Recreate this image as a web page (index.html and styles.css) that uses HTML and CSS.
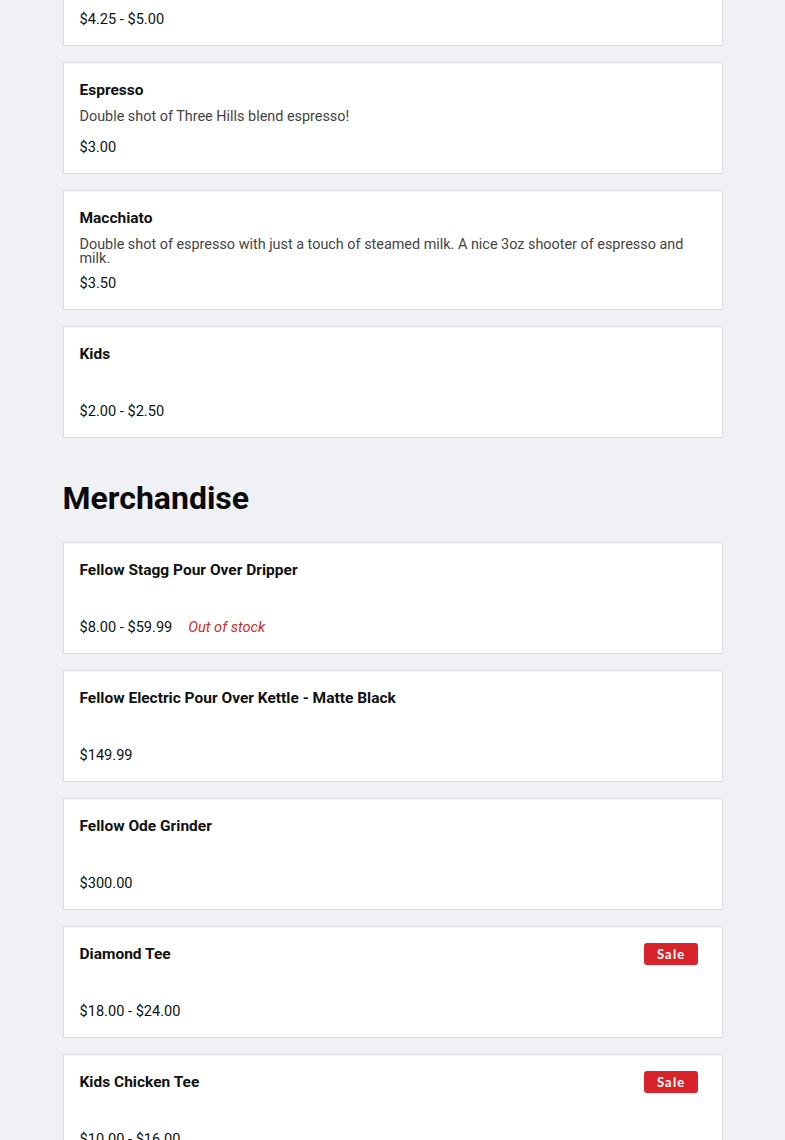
FILE: index.html
```html
<!DOCTYPE html>
<html lang="en">
<head>
<meta charset="utf-8">
<title>Menu</title>
<link rel="stylesheet" href="styles.css">
</head>
<body>
<main class="menu">
  <section class="category category-first">
    <ul class="items">
      <li class="item">
        <div class="item-name">Latte</div>
        <p class="item-desc"></p>
        <div class="item-meta"><span class="price">$4.25 - $5.00</span></div>
      </li>
      <li class="item">
        <div class="item-name">Espresso</div>
        <p class="item-desc">Double shot of Three Hills blend espresso!</p>
        <div class="item-meta"><span class="price">$3.00</span></div>
      </li>
      <li class="item">
        <div class="item-name">Macchiato</div>
        <p class="item-desc">Double shot of espresso with just a touch of steamed milk. A nice 3oz shooter of espresso and milk.</p>
        <div class="item-meta"><span class="price">$3.50</span></div>
      </li>
      <li class="item">
        <div class="item-name">Kids</div>
        <p class="item-desc"></p>
        <div class="item-meta"><span class="price">$2.00 - $2.50</span></div>
      </li>
    </ul>
  </section>
  <section class="category">
    <h2 class="category-title">Merchandise</h2>
    <ul class="items">
      <li class="item">
        <div class="item-name">Fellow Stagg Pour Over Dripper</div>
        <p class="item-desc"></p>
        <div class="item-meta"><span class="price">$8.00 - $59.99</span><span class="stock">Out of stock</span></div>
      </li>
      <li class="item">
        <div class="item-name">Fellow Electric Pour Over Kettle - Matte Black</div>
        <p class="item-desc"></p>
        <div class="item-meta"><span class="price">$149.99</span></div>
      </li>
      <li class="item">
        <div class="item-name">Fellow Ode Grinder</div>
        <p class="item-desc"></p>
        <div class="item-meta"><span class="price">$300.00</span></div>
      </li>
      <li class="item">
        <div class="item-name">Diamond Tee</div>
        <p class="item-desc"></p>
        <div class="item-meta"><span class="price">$18.00 - $24.00</span></div>
        <span class="badge">Sale</span>
      </li>
      <li class="item">
        <div class="item-name">Kids Chicken Tee</div>
        <p class="item-desc"></p>
        <div class="item-meta"><span class="price">$10.00 - $16.00</span></div>
        <span class="badge">Sale</span>
      </li>
    </ul>
  </section>
</main>
</body>
</html>
```

FILE: styles.css
```css
html, body {
  margin: 0;
  padding: 0;
  background: #f0f1f4;
}

body {
  font-family: Roboto, "Liberation Sans", Arial, sans-serif;
  color: #111;
}

.menu {
  max-width: 660px;
  margin: -66px auto 0;
}

.category-title {
  margin: 40px 0 24px;
  font-size: 32px;
  line-height: 40px;
  font-weight: 700;
  color: #0b0b0b;
}

.items {
  list-style: none;
  margin: 0;
  padding: 0;
  display: flex;
  flex-direction: column;
  gap: 16px;
}

.item {
  position: relative;
  background: #fff;
  border: 1px solid #dcdde1;
  padding: 16px;
}

.item-name {
  font-size: 15.5px;
  line-height: 20px;
  font-weight: 700;
  margin-top: 1px;
}

.item-desc {
  margin: 8px 0 7px;
  min-height: 22px;
  font-size: 14.4px;
  line-height: 14px;
  color: #444;
  padding-top: 2px;
  box-sizing: border-box;
}

.item-meta {
  display: flex;
  align-items: baseline;
  gap: 16px;
  font-size: 14.6px;
  line-height: 20px;
}

.price {
  color: #111;
}

.stock {
  color: #d12b2b;
  font-style: italic;
}

.badge {
  position: absolute;
  top: 16px;
  right: 24px;
  background: #d8232a;
  color: #fff;
  font-family: Lato, "Liberation Sans", sans-serif;
  font-size: 13px;
  font-weight: 700;
  line-height: 22px;
  letter-spacing: 1.2px;
  padding: 0 12px 0 13px;
  border-radius: 3px;
}
```
